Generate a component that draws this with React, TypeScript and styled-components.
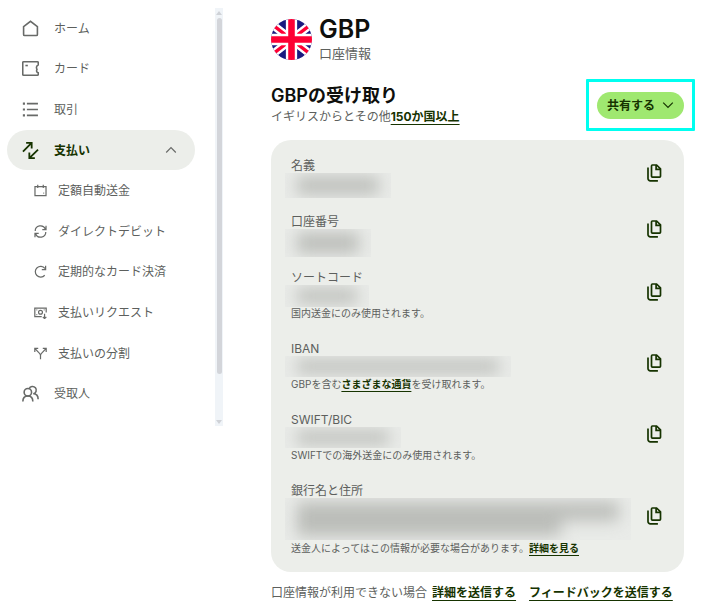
import React from 'react';
import styled, { createGlobalStyle, css } from 'styled-components';

const colors = {
  ink: '#0e0f0c',
  text: '#5d5f5d',
  icon: '#686a68',
  forest: '#163300',
  lime: '#9fe870',
  panel: '#eceeea',
  highlight: '#00fff0',
};

const GlobalStyle = createGlobalStyle`
  *, *::before, *::after { box-sizing: border-box; }
  body {
    margin: 0;
    background: #fff;
    color: ${colors.text};
    font-family: Inter, 'Noto Sans CJK JP', sans-serif;
    font-size: 12px;
  }
  h1, h2, p, ul, dl, dd { margin: 0; padding: 0; }
  ul { list-style: none; }
  button { font: inherit; border: 0; padding: 0; background: none; cursor: pointer; }
  svg { display: block; }
`;

const Page = styled.div`
  display: flex;
  align-items: flex-start;
  gap: 48px;
`;

const Sidebar = styled.nav`
  display: flex;
  flex: none;
  width: 223px;
  height: 426px;
  padding: 8px 0 0 7px;
`;

const NavList = styled.ul`
  flex: 1;
  display: grid;
  grid-auto-rows: 1fr;
  margin-right: 20px;
  padding-bottom: 12px;
`;

const navItem = css`
  display: flex;
  align-items: center;
  width: 100%;
  height: 100%;
  border-radius: 21px;
  color: ${colors.text};
  text-decoration: none;
  line-height: 19px;
`;

const NavLink = styled.a<{ $sub?: boolean }>`
  ${navItem}
  padding: 0 16px 0 ${(p) => (p.$sub ? 27 : 15)}px;
  gap: ${(p) => (p.$sub ? 11 : 15)}px;
  svg { color: ${colors.icon}; }
`;

const NavToggle = styled.button`
  ${navItem}
  padding: 0 18px 0 15px;
  gap: 15px;
  background: ${colors.panel};
  color: ${colors.forest};
  font-weight: 700;
`;

const ToggleLabel = styled.span`
  flex: 1;
  text-align: left;
`;

const Track = styled.div`
  flex: none;
  display: flex;
  flex-direction: column;
  align-items: center;
  justify-content: space-between;
  width: 8px;
  padding: 3px 0 2px;
  background: #f0f4f8;
`;

const Thumb = styled.div`
  width: 5px;
  flex: 1;
  margin: 3px 0 46px;
  border-radius: 3px;
  background: #d3d5da;
`;

const Main = styled.main`
  flex: 1;
  min-width: 0;
  padding: 16px 36px 6px 0;
`;

const AccountHeader = styled.header`
  display: flex;
  align-items: center;
  gap: 7px;
`;

const Title = styled.h1`
  color: ${colors.ink};
  font-size: 25px;
  font-weight: 600;
  line-height: 27px;
`;

const Subtitle = styled.p`
  font-size: 13px;
  line-height: 20px;
`;

const Intro = styled.section`
  display: flex;
  align-items: center;
  justify-content: space-between;
  margin: 21px 0 14px;
`;

const Heading = styled.h2`
  color: ${colors.ink};
  font-size: 18px;
  font-weight: 600;
  line-height: 24px;
`;

const Lead = styled.p`
  line-height: 18px;
`;

const TextLink = styled.a`
  color: ${colors.forest};
  font-weight: 700;
  text-decoration: underline;
  text-decoration-thickness: 1px;
  text-underline-offset: 3px;
`;

const ShareArea = styled.div`
  position: relative;
  &::after {
    content: '';
    position: absolute;
    inset: -13px -11px -12px;
    border: 3px solid ${colors.highlight};
    border-radius: 1px;
    pointer-events: none;
  }
`;

const ShareButton = styled.button`
  display: flex;
  align-items: center;
  gap: 7px;
  height: 27px;
  padding: 0 10px;
  border-radius: 14px;
  background: ${colors.lime};
  color: ${colors.forest};
  font-weight: 700;
  line-height: 19px;
`;

const Card = styled.dl`
  display: flex;
  flex-direction: column;
  gap: 18px;
  padding: 16px 22px 16px 20px;
  border-radius: 20px;
  background: ${colors.panel};
`;

const Row = styled.div`
  display: flex;
  align-items: center;
  justify-content: space-between;
`;

const Label = styled.dt`
  line-height: 19px;
`;

const Value = styled.dd<{ $tall?: boolean }>`
  display: flex;
  height: ${(p) => (p.$tall ? 41 : 19)}px;
`;

const smudge = 'linear-gradient(#bbbdb9, #bbbdb9)';

const Redacted = styled.div<{ $width: number; $height: number; $tall?: boolean }>`
  flex: none;
  width: ${(p) => p.$width}px;
  height: ${(p) => p.$height}px;
  margin: -2px 0 0 -6px;
  padding: 4px 12px;
  overflow: hidden;
  background: #e9ebe8;
  &::before {
    content: '';
    display: block;
    height: 100%;
    background: ${(p) =>
      p.$tall
        ? `${smudge} 0 0 / 100% 55% no-repeat, ${smudge} 0 100% / 82% 50% no-repeat`
        : smudge};
    filter: blur(8px);
  }
`;

const Note = styled.dd`
  font-size: 10px;
  line-height: 15px;
`;

const CopyButton = styled.button`
  flex: none;
  margin-bottom: 5px;
  color: ${colors.forest};
`;

const Footer = styled.footer`
  display: flex;
  flex-wrap: wrap;
  margin-top: 11px;
  line-height: 20px;
  gap: 13px;
`;

const FooterText = styled.p`
  display: flex;
  gap: 5px;
`;

const iconPaths: Record<string, React.ReactNode> = {
  home: <path d="M1.5 6.200 8 1.200l6.500 5v7.400a1 1 0 0 1-1 1h-11a1 1 0 0 1-1-1z" />,
  card: (
    <>
      <path d="M15.3 4.600V2.500a.8.8 0 0 0-.8-.8h-13a.8.8 0 0 0-.8.8v11a.8.8 0 0 0 .8.8h13a.8.8 0 0 0 .8-.8V12c-1.600-.5-1.900-1.800-1.200-3.200-.9-1.600-.6-3.200 1.200-4.200z" />
      <path d="M3.200 5.200h2.300" />
    </>
  ),
  list: (
    <>
      <path d="M4.6 2.500H15M4.6 8H15M4.6 13.500H15" />
      <path d="M.8 2.500h2M.8 8h2M.8 13.500h2" strokeWidth="2" />
    </>
  ),
  transfer: (
    <path d="M.9 9 8.800 1.100M3.900.9h5.200v5.200M15.100 7.100l-7.900 7.900M6.900 9.900v5.200h5.200" strokeWidth="1.700" />
  ),
  calendar: (
    <path d="M1.2 3.3h13.6v11H1.2zM4.6 1v4M11.4 1v4M11.5 11.3h1" />
  ),
  sync: (
    <path d="M1.5 7.5A6.5 6.5 0 0 1 14 5M14.8 1v4.6h-4.6M14.5 8.5A6.5 6.5 0 0 1 2 11M1.2 15v-4.6h4.6" />
  ),
  redo: <path d="M13.2 12.6A6.6 6.6 0 1 1 13.4 4.2M14.3 1v4.8H9.6" />,
  request: (
    <>
      <path d="M9.5 13H1V2.5h14V8" />
      <circle cx="8" cy="7.7" r="2.4" />
      <path d="M3 4.8h1M12 4.8h1M3 10.6h1M13 9.5v6M10.8 13.3 13 15.5l2.2-2.2" />
    </>
  ),
  split: (
    <path d="M8 15V10.500C8 8.500 6.500 7.600 5 6L1.600 2.400M8 10.500c0-2 1.500-2.900 3-4.500l3.400-3.600M1 6V1.800h4.200M10.800 1.800H15V6" />
  ),
  people: (
    <>
      <circle cx="5.500" cy="6.800" r="3.500" />
      <path d="M.8 15.500c0-3.300 2-5.200 4.700-5.200s4.700 1.900 4.700 5.200" />
      <path d="M6.700 3.500A3.500 3.500 0 1 1 10.600 8.300c2.900 0 4.600 1.900 4.600 5.200" />
    </>
  ),
};

function Icon({ name, size }: { name: string; size: number }) {
  return (
    <svg
      width={size}
      height={size}
      viewBox="0 0 16 16"
      fill="none"
      stroke="currentColor"
      strokeWidth={1.5}
      aria-hidden="true"
    >
      {iconPaths[name]}
    </svg>
  );
}

function Chevron({ up }: { up?: boolean }) {
  return (
    <svg width="12" height="12" viewBox="0 0 12 12" fill="none" stroke="currentColor" strokeWidth="1.2" aria-hidden="true">
      <path d={up ? 'M1.200 8.500 6 3.700l4.800 4.800' : 'M1.200 3.700 6 8.500l4.800-4.800'} />
    </svg>
  );
}

const GreyChevron = styled.span`
  color: ${colors.icon};
`;

function ScrollArrow({ down }: { down?: boolean }) {
  return (
    <svg width="6" height="4" viewBox="0 0 6 4" fill="#cfd2d7" aria-hidden="true">
      <path d={down ? 'M0 0h6L3 4z' : 'M0 4h6L3 0z'} />
    </svg>
  );
}

function CopyIcon() {
  return (
    <svg width="16" height="18" viewBox="0 0 16 18" fill="none" stroke="currentColor" strokeWidth="1.700" aria-hidden="true">
      <path d="M6.400 1h4.200L14.500 4.900v7.300a.9.9 0 0 1-.9.9H6.400a.9.9 0 0 1-.9-.9V1.900a.9.9 0 0 1 .9-.9z" />
      <path d="M10.100 1v4.400h4.400" />
      <path d="M2 3.400v11.100a2.300 2.300 0 0 0 2.300 2.300h7.600" />
    </svg>
  );
}

function UkFlag() {
  return (
    <svg width="41" height="41" viewBox="0 0 40 40" role="img" aria-label="GBP">
      <clipPath id="flag-circle">
        <circle cx="20" cy="20" r="20" />
      </clipPath>
      <g clipPath="url(#flag-circle)">
        <path fill="#1a1a80" d="M0 0h40v40H0z" />
        <path stroke="#fff" strokeWidth="8" d="M-2 3 42 37M42 3-2 37" />
        <path stroke="#fe0034" strokeWidth="3.400" d="M-2 3 42 37M42 3-2 37" />
        <path stroke="#fff" strokeWidth="11" d="M20 0v40M0 20h40" />
        <path stroke="#fe0034" strokeWidth="6.400" d="M20 0v40M0 20h40" />
      </g>
    </svg>
  );
}

const topItems = [
  { icon: 'home', label: 'ホーム' },
  { icon: 'card', label: 'カード' },
  { icon: 'list', label: '取引' },
];

const paymentItems = [
  { icon: 'calendar', label: '定額自動送金' },
  { icon: 'sync', label: 'ダイレクトデビット' },
  { icon: 'redo', label: '定期的なカード決済' },
  { icon: 'request', label: '支払いリクエスト' },
  { icon: 'split', label: '支払いの分割' },
];

interface Detail {
  label: string;
  width: number;
  height: number;
  note?: React.ReactNode;
  tall?: boolean;
}

const details: Detail[] = [
  { label: '名義', width: 106, height: 25 },
  { label: '口座番号', width: 86, height: 28 },
  { label: 'ソートコード', width: 84, height: 22, note: '国内送金にのみ使用されます。' },
  {
    label: 'IBAN',
    width: 226,
    height: 21,
    note: (
      <>
        GBPを含む<TextLink href="#currencies">さまざまな通貨</TextLink>を受け取れます。
      </>
    ),
  },
  { label: 'SWIFT/BIC', width: 116, height: 21, note: 'SWIFTでの海外送金にのみ使用されます。' },
  {
    label: '銀行名と住所',
    width: 346,
    height: 42,
    tall: true,
    note: (
      <>
        送金人によってはこの情報が必要な場合があります。<TextLink href="#bank">詳細を見る</TextLink>
      </>
    ),
  },
];

export default function App() {
  return (
    <>
      <GlobalStyle />
      <Page lang="ja">
        <Sidebar>
          <NavList>
            {topItems.map((item) => (
              <li key={item.label}>
                <NavLink href="#">
                  <Icon name={item.icon} size={17} />
                  {item.label}
                </NavLink>
              </li>
            ))}
            <li>
              <NavToggle type="button" aria-expanded="true">
                <Icon name="transfer" size={17} />
                <ToggleLabel>支払い</ToggleLabel>
                <GreyChevron>
                  <Chevron up />
                </GreyChevron>
              </NavToggle>
            </li>
            {paymentItems.map((item) => (
              <li key={item.label}>
                <NavLink href="#" $sub>
                  <Icon name={item.icon} size={13} />
                  {item.label}
                </NavLink>
              </li>
            ))}
            <li>
              <NavLink href="#">
                <Icon name="people" size={17} />
                受取人
              </NavLink>
            </li>
          </NavList>
          <Track aria-hidden="true">
            <ScrollArrow />
            <Thumb />
            <ScrollArrow down />
          </Track>
        </Sidebar>
        <Main>
          <AccountHeader>
            <UkFlag />
            <div>
              <Title>GBP</Title>
              <Subtitle>口座情報</Subtitle>
            </div>
          </AccountHeader>
          <Intro>
            <div>
              <Heading>GBPの受け取り</Heading>
              <Lead>
                イギリスからとその他<TextLink href="#countries">150か国以上</TextLink>
              </Lead>
            </div>
            <ShareArea>
              <ShareButton type="button">
                共有する
                <Chevron />
              </ShareButton>
            </ShareArea>
          </Intro>
          <Card>
            {details.map((d) => (
              <Row key={d.label}>
                <div>
                  <Label>{d.label}</Label>
                  <Value $tall={d.tall}>
                    <Redacted $width={d.width} $height={d.height} $tall={d.tall} />
                  </Value>
                  {d.note && <Note>{d.note}</Note>}
                </div>
                <CopyButton type="button" aria-label={`${d.label}をコピー`}>
                  <CopyIcon />
                </CopyButton>
              </Row>
            ))}
          </Card>
          <Footer>
            <FooterText>
              口座情報が利用できない場合
              <TextLink href="#details">詳細を送信する</TextLink>
            </FooterText>
            <TextLink href="#feedback">フィードバックを送信する</TextLink>
          </Footer>
        </Main>
      </Page>
    </>
  );
}
